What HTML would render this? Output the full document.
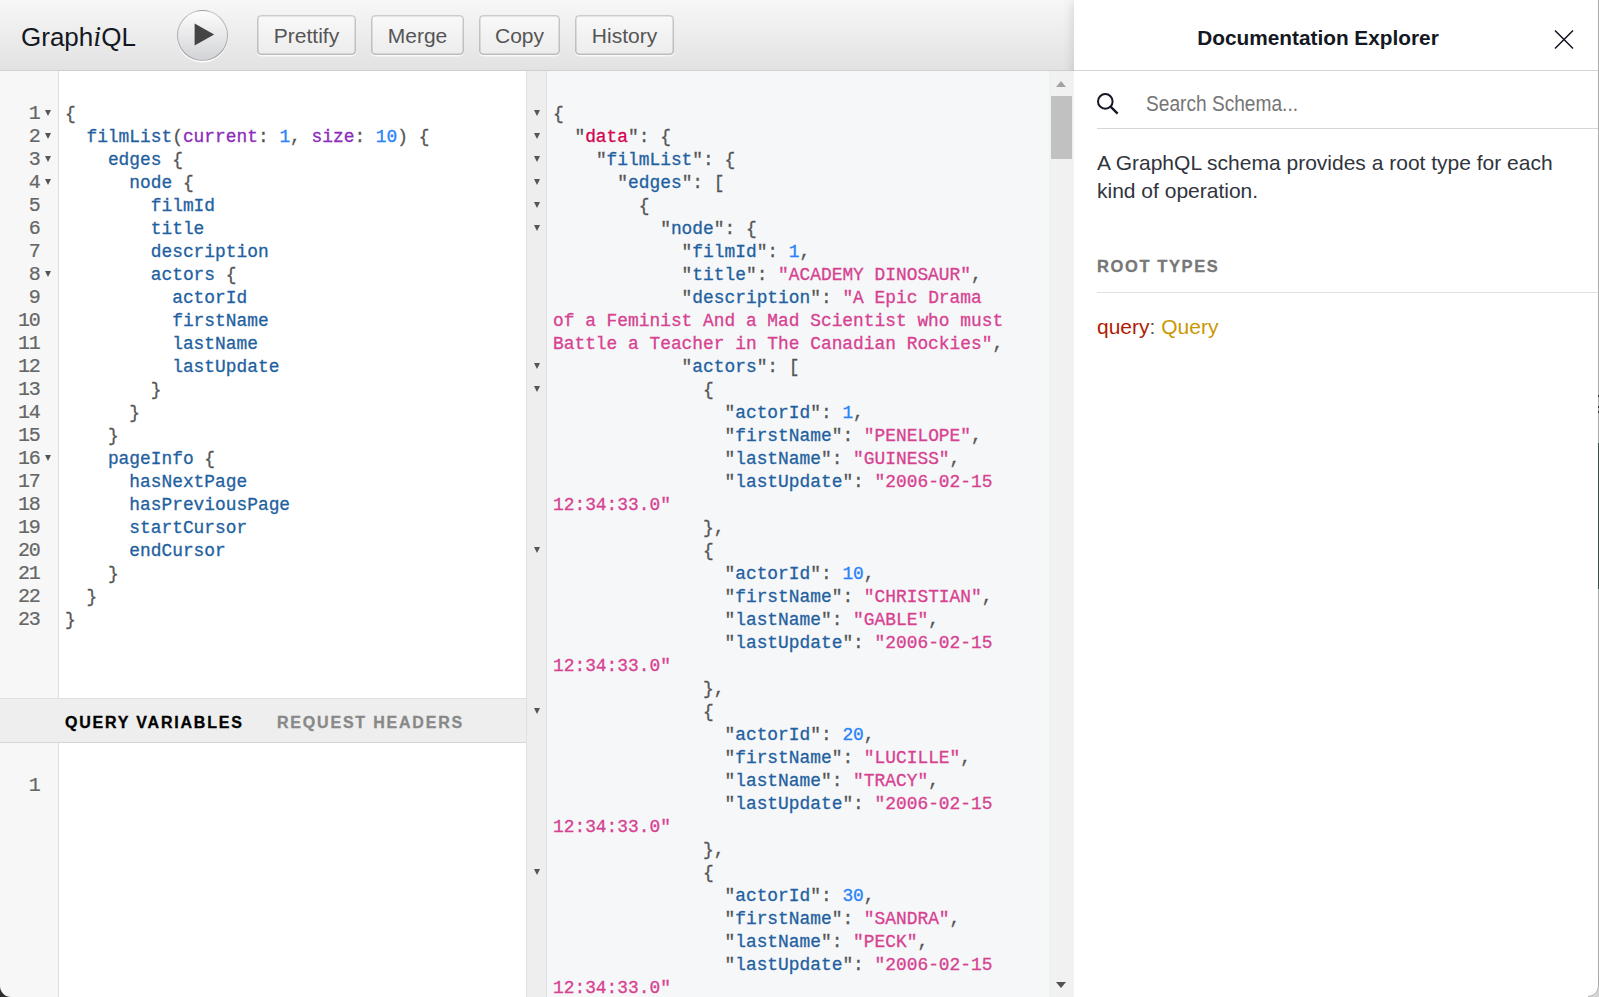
<!DOCTYPE html>
<html><head><meta charset="utf-8">
<style>
*{box-sizing:border-box}
html,body{margin:0;padding:0;width:1599px;height:997px;overflow:hidden;background:#fff;font-family:"Liberation Sans",sans-serif;color:#141823}
.abs{position:absolute}
#topbar{left:0;top:0;width:1074px;height:71px;background:linear-gradient(#f7f7f7,#e2e2e2);border-bottom:1px solid #d0d0d0}
#title{left:21px;top:21px;font-size:26px;color:#141823;white-space:nowrap;letter-spacing:0}
#title em{font-family:"Liberation Serif",serif;font-style:italic;font-size:28.5px}
#exec{left:177px;top:10px;width:51px;height:51px;border-radius:50%;background:linear-gradient(#fdfdfd,#d2d3d6);border:1.5px solid rgba(0,0,0,.25);box-shadow:0 1.5px 0 #fff}
#exec svg{position:absolute;left:0;top:0}
.btn{top:15px;height:40px;border-radius:4.5px;background:linear-gradient(#f9f9f9,#ececec);box-shadow:inset 0 0 0 1.5px rgba(0,0,0,.2),0 1.5px 0 rgba(255,255,255,.7),inset 0 1.5px #fff;color:#555;font-size:21px;text-align:center;line-height:41px;white-space:nowrap}
/* query editor */
#qed{left:0;top:71px;width:526px;height:627px;background:#fff;overflow:hidden}
.gut{position:absolute;left:0;top:0;bottom:0;width:59px;background:#f7f7f7;border-right:1px solid #ddd}
.code{position:absolute;font-family:"Liberation Mono",monospace;font-size:17.87px;line-height:23px;white-space:pre;-webkit-text-stroke:0.3px currentColor}
.ln{height:23px}
.gn{height:23px;position:relative;font-family:"Liberation Mono",monospace;font-size:20px;line-height:23px}
.gn .num{position:absolute;right:19.5px;top:1px;color:#666;letter-spacing:-1.28px;-webkit-text-stroke:0.2px currentColor}
.tri{position:absolute;width:0;height:0;border-left:3.75px solid transparent;border-right:3.75px solid transparent;border-top:6.5px solid #555}
.gn .fd{left:45.3px;top:9px}
.gf{height:23px;position:relative}
.gf .fd{left:6.8px;top:9px}
.p{color:#555}.f{color:#1F61A0}.a{color:#8B2BB9}.n{color:#2882F9}.s{color:#D64292}.d{color:#D2054E}
#vtitle{left:0;top:698px;width:526px;height:45px;background:#eee;border-top:1px solid #e0e0e0;border-bottom:1px solid #d6d6d6;font-weight:bold;font-size:16px;letter-spacing:1.8px;white-space:nowrap}
#vtitle span{position:absolute;top:15px;-webkit-text-stroke:0.3px currentColor}
#ved{left:0;top:743px;width:526px;height:254px;background:#fff}
/* result */
#res{z-index:2;left:526px;top:71px;width:548px;height:926px;background:#f6f7f8;border-left:1px solid #e0e0e0;overflow:hidden}
#rgut{position:absolute;left:0;top:0;bottom:0;width:20px;background:#eee;border-right:1px solid #e0e0e0}
#sb{position:absolute;left:522px;top:0;width:25px;bottom:0;background:#f1f1f1}
.sbu{position:absolute;left:6.8px;top:10px;width:0;height:0;border-left:5.8px solid transparent;border-right:5.8px solid transparent;border-bottom:6px solid #a3a3a3}
.sbd{position:absolute;left:6.8px;top:911px;width:0;height:0;border-left:5.8px solid transparent;border-right:5.8px solid transparent;border-top:6px solid #505050}
#thumb{position:absolute;left:2px;top:25px;width:21px;height:63px;background:#c1c1c1}
/* doc explorer */
#doc{z-index:1;left:1074px;top:0;width:525px;height:997px;background:#fff;box-shadow:0 0 12px rgba(0,0,0,.15)}
#doctitle{left:0;top:0;width:525px;height:71px;border-bottom:1.5px solid #d6d6d6}
#doctitle .t{position:absolute;left:0;width:488px;text-align:center;top:26px;font-weight:bold;font-size:20.8px;white-space:nowrap;color:#141823}
#search{left:23px;top:71px;width:502px;height:58px;border-bottom:1.5px solid #d3d6db}
#search .ph{position:absolute;left:49px;top:20px;font-size:22.5px;color:#757575;white-space:nowrap;transform:scaleX(0.85);transform-origin:0 0}
#desc{left:23px;top:149px;font-size:21px;line-height:28px;color:#30343c;white-space:nowrap}
#cat{left:23px;top:254px;width:502px;height:39px;border-bottom:1.5px solid #e0e0e0;color:#777;font-weight:bold;font-size:16.5px;letter-spacing:1.6px;-webkit-text-stroke:0.3px #777;white-space:nowrap}
#rt{left:23px;top:315px;font-size:21px;white-space:nowrap}
</style></head><body>
<div id="topbar" class="abs">
  <div id="title" class="abs">Graph<em>i</em>QL</div>
  <div id="exec" class="abs"><svg width="51" height="51" viewBox="0 0 51 51"><path d="M16.6 12.5 L16.6 34.5 L36.2 23.5 Z" fill="#444"/></svg></div>
  <div class="btn abs" style="left:257px;width:99px">Prettify</div>
  <div class="btn abs" style="left:371px;width:93px">Merge</div>
  <div class="btn abs" style="left:479px;width:81px">Copy</div>
  <div class="btn abs" style="left:575px;width:99px">History</div>
</div>
<div id="qed" class="abs">
  <div class="gut"></div>
  <div class="abs" style="left:0;top:30px;width:59px">
<div class="gn"><span class="num">1</span><span class="tri fd"></span></div><div class="gn"><span class="num">2</span><span class="tri fd"></span></div><div class="gn"><span class="num">3</span><span class="tri fd"></span></div><div class="gn"><span class="num">4</span><span class="tri fd"></span></div><div class="gn"><span class="num">5</span></div><div class="gn"><span class="num">6</span></div><div class="gn"><span class="num">7</span></div><div class="gn"><span class="num">8</span><span class="tri fd"></span></div><div class="gn"><span class="num">9</span></div><div class="gn"><span class="num">10</span></div><div class="gn"><span class="num">11</span></div><div class="gn"><span class="num">12</span></div><div class="gn"><span class="num">13</span></div><div class="gn"><span class="num">14</span></div><div class="gn"><span class="num">15</span></div><div class="gn"><span class="num">16</span><span class="tri fd"></span></div><div class="gn"><span class="num">17</span></div><div class="gn"><span class="num">18</span></div><div class="gn"><span class="num">19</span></div><div class="gn"><span class="num">20</span></div><div class="gn"><span class="num">21</span></div><div class="gn"><span class="num">22</span></div><div class="gn"><span class="num">23</span></div>
  </div>
  <div class="code" style="left:65px;top:32px"><div class="ln"><span class="p">{</span></div><div class="ln">  <span class="f">filmList</span><span class="p">(</span><span class="a">current</span><span class="p">:</span> <span class="n">1</span><span class="p">,</span> <span class="a">size</span><span class="p">:</span> <span class="n">10</span><span class="p">)</span> <span class="p">{</span></div><div class="ln">    <span class="f">edges</span> <span class="p">{</span></div><div class="ln">      <span class="f">node</span> <span class="p">{</span></div><div class="ln">        <span class="f">filmId</span></div><div class="ln">        <span class="f">title</span></div><div class="ln">        <span class="f">description</span></div><div class="ln">        <span class="f">actors</span> <span class="p">{</span></div><div class="ln">          <span class="f">actorId</span></div><div class="ln">          <span class="f">firstName</span></div><div class="ln">          <span class="f">lastName</span></div><div class="ln">          <span class="f">lastUpdate</span></div><div class="ln">        <span class="p">}</span></div><div class="ln">      <span class="p">}</span></div><div class="ln">    <span class="p">}</span></div><div class="ln">    <span class="f">pageInfo</span> <span class="p">{</span></div><div class="ln">      <span class="f">hasNextPage</span></div><div class="ln">      <span class="f">hasPreviousPage</span></div><div class="ln">      <span class="f">startCursor</span></div><div class="ln">      <span class="f">endCursor</span></div><div class="ln">    <span class="p">}</span></div><div class="ln">  <span class="p">}</span></div><div class="ln"><span class="p">}</span></div></div>
</div>
<div id="vtitle" class="abs"><span style="left:65px;color:#000">QUERY VARIABLES</span><span style="left:277px;color:#888">REQUEST HEADERS</span></div>
<div id="ved" class="abs">
  <div class="gut"></div>
  <div class="abs" style="left:0;top:30px;width:59px"><div class="gn"><span class="num">1</span></div></div>
</div>
<div id="res" class="abs">
  <div id="rgut"></div>
  <div class="abs" style="left:0;top:30px;width:20px">
<div class="gf"><span class="tri fd"></span></div><div class="gf"><span class="tri fd"></span></div><div class="gf"><span class="tri fd"></span></div><div class="gf"><span class="tri fd"></span></div><div class="gf"><span class="tri fd"></span></div><div class="gf"><span class="tri fd"></span></div><div class="gf"></div><div class="gf"></div><div class="gf"></div><div class="gf"></div><div class="gf"></div><div class="gf"><span class="tri fd"></span></div><div class="gf"><span class="tri fd"></span></div><div class="gf"></div><div class="gf"></div><div class="gf"></div><div class="gf"></div><div class="gf"></div><div class="gf"></div><div class="gf"><span class="tri fd"></span></div><div class="gf"></div><div class="gf"></div><div class="gf"></div><div class="gf"></div><div class="gf"></div><div class="gf"></div><div class="gf"><span class="tri fd"></span></div><div class="gf"></div><div class="gf"></div><div class="gf"></div><div class="gf"></div><div class="gf"></div><div class="gf"></div><div class="gf"><span class="tri fd"></span></div><div class="gf"></div><div class="gf"></div><div class="gf"></div><div class="gf"></div><div class="gf"></div>
  </div>
  <div class="code" style="left:26px;top:32px"><div class="ln"><span class="p">{</span></div><div class="ln">  <span class="p">&quot;</span><span class="d">data</span><span class="p">&quot;</span><span class="p">:</span> <span class="p">{</span></div><div class="ln">    <span class="p">&quot;</span><span class="f">filmList</span><span class="p">&quot;</span><span class="p">:</span> <span class="p">{</span></div><div class="ln">      <span class="p">&quot;</span><span class="f">edges</span><span class="p">&quot;</span><span class="p">:</span> <span class="p">[</span></div><div class="ln">        <span class="p">{</span></div><div class="ln">          <span class="p">&quot;</span><span class="f">node</span><span class="p">&quot;</span><span class="p">:</span> <span class="p">{</span></div><div class="ln">            <span class="p">&quot;</span><span class="f">filmId</span><span class="p">&quot;</span><span class="p">:</span> <span class="n">1</span><span class="p">,</span></div><div class="ln">            <span class="p">&quot;</span><span class="f">title</span><span class="p">&quot;</span><span class="p">:</span> <span class="s">&quot;ACADEMY DINOSAUR&quot;</span><span class="p">,</span></div><div class="ln">            <span class="p">&quot;</span><span class="f">description</span><span class="p">&quot;</span><span class="p">:</span> <span class="s">&quot;A Epic Drama</span></div><div class="ln"><span class="s">of a Feminist And a Mad Scientist who must</span></div><div class="ln"><span class="s">Battle a Teacher in The Canadian Rockies&quot;</span><span class="p">,</span></div><div class="ln">            <span class="p">&quot;</span><span class="f">actors</span><span class="p">&quot;</span><span class="p">:</span> <span class="p">[</span></div><div class="ln">              <span class="p">{</span></div><div class="ln">                <span class="p">&quot;</span><span class="f">actorId</span><span class="p">&quot;</span><span class="p">:</span> <span class="n">1</span><span class="p">,</span></div><div class="ln">                <span class="p">&quot;</span><span class="f">firstName</span><span class="p">&quot;</span><span class="p">:</span> <span class="s">&quot;PENELOPE&quot;</span><span class="p">,</span></div><div class="ln">                <span class="p">&quot;</span><span class="f">lastName</span><span class="p">&quot;</span><span class="p">:</span> <span class="s">&quot;GUINESS&quot;</span><span class="p">,</span></div><div class="ln">                <span class="p">&quot;</span><span class="f">lastUpdate</span><span class="p">&quot;</span><span class="p">:</span> <span class="s">&quot;2006-02-15</span></div><div class="ln"><span class="s">12:34:33.0&quot;</span></div><div class="ln">              <span class="p">}</span><span class="p">,</span></div><div class="ln">              <span class="p">{</span></div><div class="ln">                <span class="p">&quot;</span><span class="f">actorId</span><span class="p">&quot;</span><span class="p">:</span> <span class="n">10</span><span class="p">,</span></div><div class="ln">                <span class="p">&quot;</span><span class="f">firstName</span><span class="p">&quot;</span><span class="p">:</span> <span class="s">&quot;CHRISTIAN&quot;</span><span class="p">,</span></div><div class="ln">                <span class="p">&quot;</span><span class="f">lastName</span><span class="p">&quot;</span><span class="p">:</span> <span class="s">&quot;GABLE&quot;</span><span class="p">,</span></div><div class="ln">                <span class="p">&quot;</span><span class="f">lastUpdate</span><span class="p">&quot;</span><span class="p">:</span> <span class="s">&quot;2006-02-15</span></div><div class="ln"><span class="s">12:34:33.0&quot;</span></div><div class="ln">              <span class="p">}</span><span class="p">,</span></div><div class="ln">              <span class="p">{</span></div><div class="ln">                <span class="p">&quot;</span><span class="f">actorId</span><span class="p">&quot;</span><span class="p">:</span> <span class="n">20</span><span class="p">,</span></div><div class="ln">                <span class="p">&quot;</span><span class="f">firstName</span><span class="p">&quot;</span><span class="p">:</span> <span class="s">&quot;LUCILLE&quot;</span><span class="p">,</span></div><div class="ln">                <span class="p">&quot;</span><span class="f">lastName</span><span class="p">&quot;</span><span class="p">:</span> <span class="s">&quot;TRACY&quot;</span><span class="p">,</span></div><div class="ln">                <span class="p">&quot;</span><span class="f">lastUpdate</span><span class="p">&quot;</span><span class="p">:</span> <span class="s">&quot;2006-02-15</span></div><div class="ln"><span class="s">12:34:33.0&quot;</span></div><div class="ln">              <span class="p">}</span><span class="p">,</span></div><div class="ln">              <span class="p">{</span></div><div class="ln">                <span class="p">&quot;</span><span class="f">actorId</span><span class="p">&quot;</span><span class="p">:</span> <span class="n">30</span><span class="p">,</span></div><div class="ln">                <span class="p">&quot;</span><span class="f">firstName</span><span class="p">&quot;</span><span class="p">:</span> <span class="s">&quot;SANDRA&quot;</span><span class="p">,</span></div><div class="ln">                <span class="p">&quot;</span><span class="f">lastName</span><span class="p">&quot;</span><span class="p">:</span> <span class="s">&quot;PECK&quot;</span><span class="p">,</span></div><div class="ln">                <span class="p">&quot;</span><span class="f">lastUpdate</span><span class="p">&quot;</span><span class="p">:</span> <span class="s">&quot;2006-02-15</span></div><div class="ln"><span class="s">12:34:33.0&quot;</span></div></div>
  <div id="sb"><div class="sbu"></div><div id="thumb"></div><div class="sbd"></div></div>
</div>
<div id="doc" class="abs">
  <div id="doctitle" class="abs"><div class="t">Documentation Explorer</div>
    <svg class="abs" style="left:480px;top:30px" width="20" height="19" viewBox="0 0 20 19"><path d="M1 0.5 L19 18.5 M19 0.5 L1 18.5" stroke="#141823" stroke-width="1.5"/></svg>
  </div>
  <div id="search" class="abs">
    <svg class="abs" style="left:0;top:21px" width="24" height="24" viewBox="0 0 24 24"><circle cx="8.3" cy="9.4" r="7.3" fill="none" stroke="#141823" stroke-width="2"/><path d="M13.6 14.6 L20.6 21.6" stroke="#141823" stroke-width="2.4"/></svg>
    <div class="ph">Search Schema...</div>
  </div>
  <div id="desc" class="abs">A GraphQL schema provides a root type for each<br>kind of operation.</div>
  <div id="cat" class="abs"><span style="position:absolute;top:3px">ROOT TYPES</span></div>
  <div id="rt" class="abs"><span style="color:#B11A04">query</span><span style="color:#555">:</span> <span style="color:#CA9800">Query</span></div>
</div>
<div class="abs" style="left:1598px;top:0;width:1px;height:986px;background:#ababab;z-index:5"></div>
<div class="abs" style="left:1598px;top:443px;width:1px;height:146px;background:#3a4a4a;z-index:6"></div>
<div class="abs" style="left:1598px;top:395px;width:1px;height:2px;background:#2a3548;z-index:6"></div><div class="abs" style="left:1598px;top:406px;width:1px;height:2px;background:#2a3548;z-index:6"></div><div class="abs" style="left:1598px;top:411px;width:1px;height:2px;background:#2a3548;z-index:6"></div>
<svg class="abs" style="left:0;top:977px;z-index:7" width="20" height="20" viewBox="0 0 20 20"><path d="M0 9 A11 11 0 0 0 11 20 L0 20 Z" fill="#2e2e2e"/></svg>
<svg class="abs" style="left:1579px;top:977px;z-index:7" width="20" height="20" viewBox="0 0 20 20"><path d="M20 9 A11 11 0 0 1 9 20 L20 20 Z" fill="#d2d2d2"/><path d="M19.5 0 L19.5 9 A10.5 10.5 0 0 1 9 19.5" fill="none" stroke="#a8a8a8" stroke-width="1"/></svg>
</body></html>
